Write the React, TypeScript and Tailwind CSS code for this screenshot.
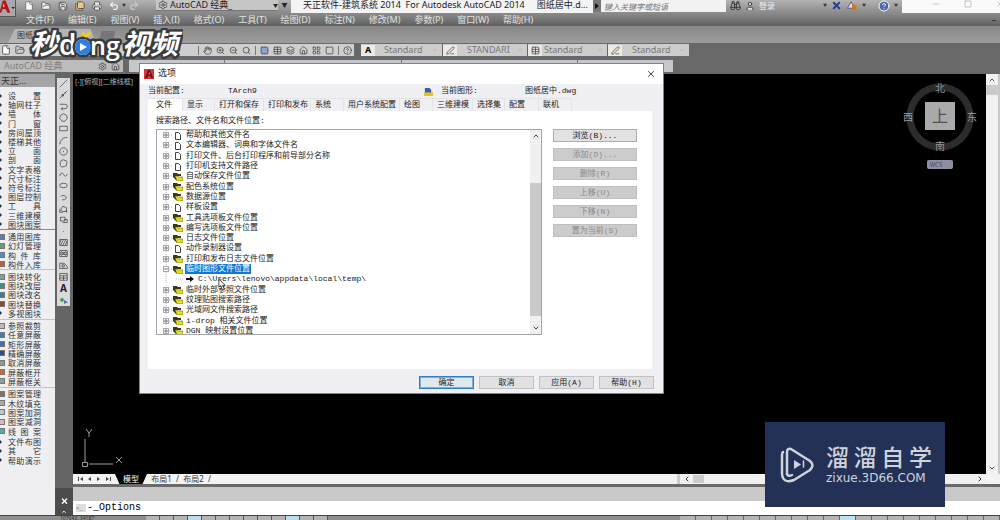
import React from 'react';
import {
  Binoculars,
  ChevronDown,
  ChevronLeft,
  ChevronRight,
  ChevronUp,
  CircleHelp,
  File,
  FolderOpen,
  Grid2x2,
  Hand,
  Home,
  Layers,
  LayoutGrid,
  Minus,
  PenLine,
  Printer,
  Redo2,
  Save,
  SaveAll,
  Search,
  Settings,
  Square,
  Table,
  Undo2,
  User,
  X,
  ZoomIn,
  ZoomOut,
} from 'lucide-react';

const menus = [
  '文件(F)', '编辑(E)', '视图(V)', '插入(I)', '格式(O)', '工具(T)',
  '绘图(D)', '标注(N)', '修改(M)', '参数(P)', '窗口(W)', '帮助(H)',
];

type PaletteGroup = { box: string; items: [string, string][] };

// [label, colour of the little icon]; an empty colour draws the arrow bullet
const palette: PaletteGroup[] = [
  {
    box: 'h-[139px] border-b border-[#8a8a8e]',
    items: [
      ['设 置', ''], ['轴网柱子', ''], ['墙 体', ''], ['门 窗', ''], ['房间屋顶', ''],
      ['楼梯其他', ''], ['立 面', ''], ['剖 面', ''], ['文字表格', ''], ['尺寸标注', ''],
      ['符号标注', ''], ['图层控制', ''], ['工 具', ''], ['三维建模', ''], ['图块图案', ''],
    ],
  },
  {
    box: 'h-[40px] pt-0.5 border-b border-[#c4c2c6]',
    items: [
      ['通用图库', 'bg-[#5b7fb0]'], ['幻灯管理', 'bg-[#6d9a76]'],
      ['构 件 库', 'bg-[#5a86c4]'], ['构件入库', 'bg-[#b8603c]'],
    ],
  },
  {
    box: 'h-[50px] pt-0.5 pb-px border-b border-[#c4c2c6]',
    items: [
      ['图块转化', 'bg-[#7fa39a]'], ['图块改层', 'bg-[#3f8c8c]'], ['图块改名', 'bg-[#3f7c94]'],
      ['图块替换', 'bg-[#8a4a2e]'], ['多视图块', ''],
    ],
  },
  {
    box: 'h-[68px] pt-px pb-px border-b border-[#c4c2c6]',
    items: [
      ['参照裁剪', 'bg-[#b8bcc0]'], ['任意屏蔽', 'bg-[#3d7fae]'], ['矩形屏蔽', 'bg-[#3a72b4]'],
      ['精确屏蔽', 'bg-[#2e4f8c]'], ['取消屏蔽', 'bg-[#8e9a94]'], ['屏蔽框开', 'bg-[#c8693c]'],
      ['屏蔽框关', 'bg-[#8ea090]'],
    ],
  },
  {
    box: 'h-[48px] pt-px',
    items: [
      ['图案管理', 'bg-[#7a7a5a]'], ['木纹填充', 'bg-[#a8a8a8]'], ['图案加洞', 'bg-[#b4c8dc]'],
      ['图案减洞', 'bg-[#dcb8c0]'], ['线 图 案', 'bg-[#58a8a8]'],
    ],
  },
  {
    box: 'h-[29px] pt-px',
    items: [['文件布图', ''], ['其 它', ''], ['帮助演示', '']],
  },
];

const drawTools = [
  'M1 11 L11 1',
  'M1 11 L5 7 L7 5 L11 1 M4 6h2v2h-2z M7 4h2',
  'M1 3h7a3 3 0 0 1 0 6h-5 M5 7l-2 2 2 2',
  'M6 1l4 2 1 4-3 4H4L1 7l1-4z',
  'M1 3h10v6H1z',
  'M1 11C2 5 5 2 11 2 M1 10h1',
  'M6 1a5 5 0 1 0 .1 0z M6 5v2',
  'M3 2q3-2 5 0q4 0 2 4q1 4-3 4q-4 2-5-1q-2-4 1-7z',
  'M1 8q2-7 5-2t5-1',
  'M1 6a5 3 0 1 1 10 0a5 3 0 1 1-10 0z',
  'M2 5a4 3 0 1 1 5 4 M7 9h-3',
  'M2 8l3-5 5 2v5H5z M1 7v4h4 M8 9l3 2',
  'M2 3h6v5H2z M7 6h4v4H5',
  'M5.5 6h1',
  'M1 2h10v8H1z M3 2l-2 4 M6 2L2 10 M9 2L5 10 M11 4L8 10',
  'M1 2h10v8H1z M1 5h10 M1 7h10 M3 3l6 6 M9 3L3 9',
  'M1 3h6l4 4v3H1z M4 5h3v3H4z',
  'M1 2h10v9H1z M1 5h10 M1 8h10 M6 5v6',
];

type TreeNode = { text: string; icon: 'page' | 'folder' | 'path'; open?: boolean };

const tree: TreeNode[] = [
  { text: '帮助和其他文件名', icon: 'page' },
  { text: '文本编辑器、词典和字体文件名', icon: 'page' },
  { text: '打印文件、后台打印程序和前导部分名称', icon: 'page' },
  { text: '打印机支持文件路径', icon: 'page' },
  { text: '自动保存文件位置', icon: 'folder' },
  { text: '配色系统位置', icon: 'folder' },
  { text: '数据源位置', icon: 'folder' },
  { text: '样板设置', icon: 'page' },
  { text: '工具选项板文件位置', icon: 'folder' },
  { text: '编写选项板文件位置', icon: 'folder' },
  { text: '日志文件位置', icon: 'folder' },
  { text: '动作录制器设置', icon: 'page' },
  { text: '打印和发布日志文件位置', icon: 'folder' },
  { text: '临时图形文件位置', icon: 'folder', open: true },
  { text: 'C:\\Users\\lenovo\\appdata\\local\\temp\\', icon: 'path' },
  { text: '临时外部参照文件位置', icon: 'folder' },
  { text: '纹理贴图搜索路径', icon: 'folder' },
  { text: '光域网文件搜索路径', icon: 'folder' },
  { text: 'i-drop 相关文件位置', icon: 'folder' },
  { text: 'DGN 映射设置位置', icon: 'folder' },
];

const optionTabs = [
  ['文件', 'w-[35px] pl-2 bg-white'],
  ['显示', 'w-[32px] pl-1'],
  ['打开和保存', 'w-[49px] pl-1'],
  ['打印和发布', 'w-[47px] pl-1'],
  ['系统', 'w-[33px] pl-1'],
  ['用户系统配置', 'w-[56px] pl-1'],
  ['绘图', 'w-[33px] pl-1'],
  ['三维建模', 'w-[40px] pl-1'],
  ['选择集', 'w-[32px] pl-1'],
  ['配置', 'w-[34px] pl-1'],
  ['联机', 'w-[33px] pl-1'],
];

const sideButtons = ['浏览(B)...', '添加(D)...', '删除(R)', '上移(U)', '下移(N)', '置为当前(S)'];

const AppLogo = ({ className }: { className: string }) => (
  <svg viewBox="0 0 12 12" className={className}>
    <rect width="12" height="12" fill="#d8343a" />
    <path d="M1 11L5 1h2l4 10H8.5L7.6 8H5L3.6 11z" fill="#6c1015" />
    <path d="M5.5 6.2h1.6L6.3 3.6z" fill="#f2b8ba" />
  </svg>
);

const TitleBar = () => (
  <header className="flex h-[13px] shrink-0 items-start bg-gradient-to-b from-[#b4b4b4] to-[#8a8a8a] text-[9px] leading-[10px] text-[#222]">
    <div className="z-10 h-[17px] w-[16px] shrink-0 border-r border-b border-[#555] bg-[#a8a8a8]">
      <svg viewBox="0 0 16 16" className="h-[16px] w-[15px]">
        <path d="M0 11L3 0h3l5 13H8L6 9H3L1 13H0z" fill="#b3161c" />
        <path d="M3 7h2L4 3z" fill="#f5d0d0" />
        <path d="M12 7h4l-2 2z" fill="#222" />
      </svg>
    </div>
    <div className="flex h-[11px] w-[140px] shrink-0 items-center gap-[7px] pl-[8px] text-white">
      <File size={10} fill="#fff" stroke="#666" />
      <FolderOpen size={10} fill="#eee" stroke="#555" />
      <Save size={10} fill="#ddd" stroke="#444" />
      <SaveAll size={10} fill="#e8c98a" stroke="#444" />
      <Printer size={10} fill="#eee" stroke="#444" />
      <Undo2 size={10} stroke="#eee" strokeWidth={3} />
      <span className="-mx-1 text-[4px] text-[#333]">▼</span>
      <Redo2 size={10} stroke="#c8c8c8" strokeWidth={3} />
    </div>
    <div className="flex h-[11px] w-[122px] shrink-0 items-center border-b border-[#777] bg-[#c6c6c6] pl-0.5">
      <Settings size={10} stroke="#444" />
      <select aria-label="工作空间" className="ml-0.5 flex-1 appearance-none bg-transparent leading-[10px]">
        <option>AutoCAD 经典_</option>
      </select>
      <span className="text-[5px]">▼</span>
    </div>
    <span className="w-[13px] shrink-0 text-center text-[6px]">▼</span>
    <div className="flex h-full w-[302px] shrink-0 gap-3 bg-[#f4f4f4] pl-3 leading-[10px] whitespace-pre">
      <span>天正软件-建筑系统 2014  For Autodesk AutoCAD 2014</span>
      <span>图纸居中.d...</span>
    </div>
    <button aria-label="展开搜索" className="flex h-[12px] w-[8px] shrink-0 items-center justify-center bg-[#777]">
      <svg viewBox="0 0 4 6" className="h-[6px] w-[4px]"><path d="M0 0l4 3-4 3z" fill="#111" /></svg>
    </button>
    <input
      aria-label="搜索"
      placeholder="键入关键字或短语"
      className="h-[12px] w-[125px] shrink-0 bg-[#f2f2f2] px-[3px] text-[8px] italic placeholder:text-[#777]"
    />
    <div className="flex h-[11px] min-w-0 flex-1 items-center pl-1 text-[#333]">
      <Binoculars size={11} />
      <User size={10} fill="#ddd" className="ml-1" />
      <a href="#login" className="ml-1 text-[8px] text-[#eee]">登录</a>
      <div className="ml-auto flex items-center gap-1 pr-1">
        <span className="text-[4px]">▼</span>
        <X size={11} stroke="#23408f" strokeWidth={4} />
        <svg viewBox="0 0 12 12" className="h-[11px] w-[12px]">
          <path d="M1 9L5 2l4 7z" fill="#dde" stroke="#557" />
          <rect x="6" y="5" width="5" height="6" fill="#d9721c" />
        </svg>
        <span className="text-[4px]">▼</span>
        <CircleHelp size={12} fill="#4a66b0" stroke="#fff" className="ml-2" />
        <span className="text-[4px]">▼</span>
      </div>
    </div>
    <div className="flex h-full w-[98px] shrink-0 items-start justify-end gap-[24px] bg-[#fafafa] text-[#aaa]">
      <Minus size={8} />
      <Square size={8} />
      <X size={8} className="-mr-1" />
    </div>
  </header>
);

const MenuBar = () => (
  <nav className="flex h-[13px] shrink-0 items-center gap-[14px] bg-gradient-to-b from-[#8c8c8c] to-[#606060] pl-[26px] text-[9px] leading-[13px] text-[#e2e2e2]">
    {menus.map((m) => (
      <a key={m} href="#menu">{m}</a>
    ))}
    <span className="ml-auto pr-1 text-[#222]">–</span>
  </nav>
);

const StyleBox = ({ label, width, pad, icon }: { label: string; width: string; pad: string; icon: React.ReactNode }) => (
  <div className={`flex h-[12px] items-center border-r border-[#666] ${width}`}>
    <span className="flex h-[11px] w-[14px] items-center justify-center bg-[#efe9e4]">{icon}</span>
    <select aria-label="样式" className={`min-w-0 flex-1 appearance-none text-[9px] leading-[12px] text-[#777] ${pad}`}>
      <option>{label}</option>
    </select>
    <ChevronDown size={6} className="mr-1 text-[#999]" />
  </div>
);

const Toolbars = () => (
  <div className="flex h-[31px] shrink-0 flex-col gap-[4px] bg-[#686868] pt-px text-[#444]">
    <div className="flex h-[12px]">
      <div className="flex w-[354px] items-center gap-[4px] bg-[#cfcfcf] pr-[2px] pl-px">
        <File size={10} fill="#fff" />
        <FolderOpen size={10} />
        <Save size={10} />
        <Printer size={10} />
        <span className="ml-auto" />
        <Redo2 size={9} className="mr-3 text-[#aaa]" />
        <span className="h-[9px] w-px bg-[#777]" />
        <Hand size={9} />
        <ZoomIn size={9} />
        <ZoomOut size={9} />
        <Search size={9} />
        <span className="h-[9px] w-px bg-[#777]" />
        <Grid2x2 size={9} fill="#8aa6cc" />
        <Table size={9} />
        <Layers size={9} />
        <Home size={9} />
        <LayoutGrid size={9} />
        <Square size={9} />
        <span className="h-[9px] w-px bg-[#777]" />
        <CircleHelp size={9} />
      </div>
      <div className="ml-[7px] flex bg-[#cdcdcd]">
        <StyleBox label="Standard" width="w-[82px]" pad="pl-[9px]" icon={<span className="text-[9px] font-bold text-black">A</span>} />
        <StyleBox label="STANDARI" width="w-[85px]" pad="pl-[10px]" icon={<PenLine size={9} />} />
        <StyleBox label="Standard" width="w-[80px]" pad="pl-[2px]" icon={<Table size={9} />} />
        <StyleBox label="Standard" width="w-[82px]" pad="pl-[10px]" icon={<PenLine size={9} />} />
      </div>
    </div>
    <div className="flex h-[12px]">
      <div className="flex w-[123px] items-center bg-[#bcbcbc]">
        <select aria-label="工作空间切换" className="w-[98px] appearance-none pl-1 text-[9px] leading-[12px] text-[#808080]">
          <option>AutoCAD 经典</option>
        </select>
        <Settings size={9} />
        <Home size={9} className="ml-1" />
      </div>
      <div className="ml-[6px] flex w-[544px] justify-between bg-[#c4c8cc] px-[95px]">
        <span className="h-full w-px bg-[#777]" />
        <span className="h-full w-px bg-[#777]" />
        <span className="h-full w-px bg-[#777]" />
      </div>
    </div>
  </div>
);

const Palette = () => (
  <aside className="w-[55px] shrink-0 overflow-hidden bg-[#efeef1] text-[8px] text-[#333]">
    <h2 className="mb-[4px] h-[13px] bg-[#a5a5a7] pl-px text-[9px] leading-[13px]">天正...</h2>
    {palette.map((group, i) => (
      <ul key={i} className={`grid auto-rows-fr ${group.box}`}>
        {group.items.map(([label, color]) => (
          <li key={label} className="flex min-h-0 items-center gap-[3px] leading-[9px]">
            {color ? (
              <span className={`h-[6px] w-[5px] border border-l-0 border-[#777] ${color}`} />
            ) : (
              <svg viewBox="0 0 5 6" className="h-[6px] w-[5px]"><path d="M0 1l2 2-2 2z" fill="#234" /></svg>
            )}
            <span className="w-[33px] [text-align-last:justify]">{label}</span>
          </li>
        ))}
      </ul>
    ))}
  </aside>
);

const DrawBar = () => (
  <div className="flex w-[18px] shrink-0 flex-col bg-[#656565]">
    <div className="mt-[4px] ml-[2px] flex h-[228px] w-[13px] flex-col items-center justify-between bg-[#d9d9db] py-px text-[#444]">
      {drawTools.map((d, i) => (
        <svg key={i} viewBox="0 0 12 12" className="h-[9px] w-[9px]" fill="none" stroke="currentColor">
          <path d={d} />
        </svg>
      ))}
      <span className="text-[10px] leading-[10px] font-bold text-[#222]">A</span>
      <svg viewBox="0 0 12 12" className="h-[9px] w-[9px]">
        <circle cx="4" cy="5" r="2.500" fill="#3c9a4a" />
        <path d="M7 5v6l2-2h3z" fill="#3a5f9c" />
      </svg>
    </div>
    <div className="mt-auto flex h-[27px] flex-col items-center gap-1 bg-[#4c4c4c] pt-[9px] text-white">
      <X size={9} strokeWidth={4} />
      <ChevronUp size={6} strokeWidth={4} />
    </div>
  </div>
);

const ViewCube = () => (
  <svg viewBox="0 0 76 92" className="h-[92px] w-[76px]" fontFamily="Noto Sans CJK SC, sans-serif" fontSize="10" textAnchor="middle">
    <circle cx="38" cy="37" r="30" fill="none" stroke="#2c2c2c" strokeWidth="7" />
    <rect x="23" y="22" width="30" height="28" fill="#a9a9ab" />
    <text x="38" y="42" fontSize="16" fill="#505054">上</text>
    <g fill="#9a9a9a">
      <text x="38" y="12">北</text>
      <text x="6" y="41">西</text>
      <text x="70" y="41">东</text>
      <text x="38" y="70">南</text>
    </g>
    <rect x="25" y="80" width="26" height="9" rx="2" fill="#8f8fa2" />
    <text x="34" y="87" fontSize="6" fill="#44445a">WCS</text>
  </svg>
);

const Canvas = () => (
  <div className="flex min-h-0 flex-1 bg-black">
    <div className="flex min-w-0 flex-1 flex-col justify-between">
      <div className="flex justify-between pl-[2px]">
        <span className="pt-[3px] text-[7px] leading-[9px] text-[#b0b0b0]">[-][俯视][二维线框]</span>
        <div className="pt-[6px] pr-[8px]"><ViewCube /></div>
      </div>
      <svg viewBox="0 0 56 48" className="ml-[7px] h-[48px] w-[56px]" fill="none" stroke="#9c9c9c">
        <path d="M5 13v23M9 38h24M2.500 36.500h5v4h-5zM6 3l3 4 3-4M9 7v4M36 31l6 6M42 31l-6 6" />
      </svg>
    </div>
    <div className="flex w-[12px] flex-col items-center bg-[#f1f0f2] text-[#555]">
      <ChevronUp size={8} strokeWidth={3} className="mt-[2px]" />
      <div className="mt-px h-[10px] w-full bg-[#cbcbcb]" />
      <ChevronDown size={8} strokeWidth={3} className="mt-auto mb-[2px]" />
    </div>
    <div className="w-[2px] bg-[#c9c9c9]" />
  </div>
);

const LayoutTabs = () => (
  <div className="flex h-[10px] shrink-0 items-center bg-[#f3f3f3] text-[8px] leading-[10px] text-[#333]">
    <svg viewBox="0 0 42 10" className="h-[10px] w-[42px]" fill="#444">
      <path d="M5 3h1v4H5zM10 3v4L7 5zM18 3v4l-3-2zM24 3v4l3-2zM33 3v4l3-2zM37 3h1v4h-1z" />
    </svg>
    <button className="h-full w-[32px] bg-black text-white [clip-path:polygon(0_0,100%_0,86%_100%,14%_100%)]">模型</button>
    <button className="w-[29px] text-center">布局1</button>
    <span>/</span>
    <button className="w-[29px] text-center">布局2</button>
    <span>/</span>
    <div className="ml-auto flex h-full w-[309px] items-center bg-[#f0f0f0]">
      <span className="h-full w-[3px] bg-[#ccc]" />
      <ChevronLeft size={8} strokeWidth={3} className="ml-[3px]" />
      <span className="ml-[2px] h-[8px] w-[11px] bg-[#cbcbcb]" />
      <ChevronRight size={8} strokeWidth={3} className="mr-[2px] ml-auto" />
    </div>
    <div className="w-[14px]" />
  </div>
);

const CommandLine = () => (
  <div className="shrink-0 border-t-[3px] border-[#6a6a6a] bg-[#c9c9c9]">
    <div className="h-[14px]" />
    <label className="flex h-[14px] items-center bg-white pl-[3px]">
      <span className="flex h-[8px] w-[10px] items-center bg-[#ddd] text-[6px] leading-[8px] text-[#555]">&gt;_</span>
      <input
        aria-label="命令行"
        defaultValue="-_Options"
        className="ml-px h-[14px] flex-1 font-['Liberation_Mono',monospace] text-[10px] leading-[14px] text-black"
      />
    </label>
  </div>
);

const StatusBar = () => (
  <footer className="flex h-[5px] shrink-0 items-start overflow-hidden border-t border-[#444] bg-[#8e8e8e] text-[5px] leading-[5px] text-[#333]">
    <span className="w-[146px] pl-[60px]">107643, 34187</span>
    {Array.from({ length: 13 }, (_, i) => (
      <span
        key={i}
        className={`h-full w-[14px] border-r border-[#555] ${i === 3 || i === 10 ? 'bg-[#b9dcee]' : 'bg-[#b4b4b4]'}`}
      />
    ))}
    <span className="ml-auto flex h-full">
      {Array.from({ length: 20 }, (_, i) => (
        <span
          key={i}
          className={`h-full w-[16px] border-r border-[#666] ${i === 10 ? 'bg-[#b9e4f2]' : 'bg-[#b4b4b4]'}`}
        />
      ))}
    </span>
  </footer>
);

const NodeIcon = ({ icon }: { icon: TreeNode['icon'] }) => {
  if (icon === 'page') {
    return (
      <svg viewBox="0 0 10 9" className="h-[9px] w-[10px]" fill="#fff" stroke="#444">
        <path d="M2.500 1.500h3l2 2v5h-5z" />
      </svg>
    );
  }
  return (
    <svg viewBox="0 0 10 9" className="h-[9px] w-[10px]">
      <path d="M0 1h4l1 1h3v2H4v4H3L0 5z" fill="#3c3a10" />
      <path d="M2 4h2l1 1h5v4H4z" fill="#e6e01e" stroke="#4a4810" strokeWidth="0.500" />
    </svg>
  );
};

const FileTree = () => (
  <div className="flex h-[206px] w-[386px] overflow-hidden border border-[#a5a5aa] bg-white">
    <ul className="grid h-[206px] flex-1 auto-rows-fr pl-[5px]">
      {tree.map((node) => (
        <li key={node.text} className="flex min-h-0 items-center leading-[10px] whitespace-pre">
          {node.icon === 'path' ? (
            <svg viewBox="0 0 35 10" className="h-[10px] w-[35px]">
              <path d="M4 0v10M14 5h8" stroke="#bbb" strokeDasharray="1 1" />
              <path d="M24 4h4V2l4 3-4 3V6h-4z" fill="#111" />
            </svg>
          ) : (
            <>
              <svg viewBox="0 0 11 10" className="h-[10px] w-[11px]" fill="#fff" stroke="#aaa">
                <path d="M4 0v10M7 5h4" stroke="#bbb" strokeDasharray="1 1" />
                <rect x="1.500" y="2.500" width="5" height="5" />
                <path d={node.open ? 'M2 5h4' : 'M2 5h4M4 3v4'} stroke="#777" />
              </svg>
              <NodeIcon icon={node.icon} />
              <span className="w-[2px]" />
            </>
          )}
          <span className={node.open ? 'bg-[#0f78d4] px-px text-white' : 'px-px'}>{node.text}</span>
        </li>
      ))}
    </ul>
    <div className="flex w-[11px] flex-col items-center bg-[#f0f0f0] text-[#444]">
      <ChevronUp size={8} strokeWidth={3} className="mt-[2px]" />
      <div className="mt-[43px] h-[133px] w-full bg-[#cacaca]" />
      <ChevronDown size={8} strokeWidth={3} className="mt-auto mb-[2px]" />
    </div>
  </div>
);

const dialogButton = 'h-[13px] border text-center leading-[11px]';

const OptionsDialog = () => (
  <section
    role="dialog"
    aria-label="选项"
    className="absolute top-[63px] left-[139px] w-[525px] border border-[#5f8fae] bg-[#f0eff3] pb-[4px] font-['Liberation_Mono','Noto_Sans_CJK_SC',monospace] text-[8px] text-[#222]"
  >
    <div className="flex h-[20px] items-center bg-white pr-[7px] pl-[4px]">
      <AppLogo className="h-[10px] w-[10px]" />
      <h1 className="ml-[4px] text-[9px] leading-[12px]">选项</h1>
      <button aria-label="关闭" className="ml-auto"><X size={10} /></button>
    </div>
    <div className="flex h-[14px] items-center pl-[8px]">
      <span className="w-[80px]">当前配置:</span>
      <span className="w-[196px]">TArch9</span>
      <svg viewBox="0 0 10 10" className="h-[9px] w-[9px]">
        <path d="M1 1h5l2 2v4H1z" fill="#3a5bb0" />
        <path d="M0 6h10v4H0z" fill="#e2c51c" />
      </svg>
      <span className="ml-[8px] w-[84px]">当前图形:</span>
      <span>图纸居中.dwg</span>
    </div>
    <div role="tablist" className="flex h-[13px] pl-[8px]">
      {optionTabs.map(([label, cls]) => (
        <button
          key={label}
          role="tab"
          className={`shrink-0 border-t border-r border-[#e4e3e8] text-left leading-[12px] whitespace-nowrap ${cls}`}
        >
          {label}
        </button>
      ))}
    </div>
    <div className="mr-[11px] ml-[8px] bg-white px-[8px] pt-[4px] pb-[34px]">
      <p className="h-[14px] leading-[12px]">搜索路径、文件名和文件位置:</p>
      <div className="flex gap-[11px]">
        <FileTree />
        <div className="flex w-[84px] flex-col gap-[6px]">
          {sideButtons.map((label, i) => (
            <button
              key={label}
              disabled={i > 0}
              className={`${dialogButton} ${i === 0 ? 'border-[#adadad] bg-[#e2e2e2]' : 'border-[#bfbfbf] bg-[#cccccc] text-[#8a8a8a]'}`}
            >
              {label}
            </button>
          ))}
        </div>
      </div>
    </div>
    <div className="flex justify-end gap-[5px] pt-[7px] pr-[9px]">
      <button className={`${dialogButton} w-[55px] border-[#2f7fc4] bg-[#e1e8ee] outline outline-[#7fb0da] -outline-offset-2`}>确定</button>
      <button className={`${dialogButton} w-[55px] border-[#c2c2c4] bg-[#e1e1e1]`}>取消</button>
      <button className={`${dialogButton} w-[55px] border-[#c2c2c4] bg-[#e1e1e1]`}>应用(A)</button>
      <button className={`${dialogButton} w-[55px] border-[#c2c2c4] bg-[#e1e1e1]`}>帮助(H)</button>
    </div>
  </section>
);

const VideoLogo = () => (
  <svg
    viewBox="0 0 158 36"
    className="absolute top-[28px] left-[25px] h-[36px] w-[158px]"
    fontFamily="Noto Sans CJK SC, sans-serif"
    fontWeight="700"
    fill="#fff"
    stroke="#3a3a3c"
    strokeWidth="5"
    strokeLinejoin="round"
    paintOrder="stroke"
  >
    <text x="5" y="26" fontSize="28" fontStyle="italic">秒</text>
    <text x="34" y="27" fontSize="28" fontWeight="600" fontFamily="Open Sans, sans-serif">d</text>
    <circle cx="58" cy="19" r="8" />
    <text x="65" y="27" fontSize="25" fontWeight="600" fontFamily="Open Sans, sans-serif">ng</text>
    <text x="97" y="26" fontSize="28" fontStyle="italic">视频</text>
    <circle cx="58" cy="19" r="8" fill="#2f7fe0" stroke="none" />
    <path d="M55 15l7 4-7 4z" stroke="none" />
    <path d="M57 5l4 3 4-3" fill="none" stroke="#f2cf1f" strokeWidth="3" />
  </svg>
);

const SiteBadge = () => (
  <div className="absolute right-[55px] bottom-[13px] flex h-[85px] w-[180px] items-center bg-[#233156] pl-[15px] text-[#cfd3dc]">
    <svg viewBox="0 0 34 36" className="h-[36px] w-[34px]" fill="none" stroke="currentColor" strokeWidth="2.500" strokeLinecap="round" strokeLinejoin="round">
      <path d="M7 27V5q0-4 4-3l19 12q5 4 0 9L14 33q-11 4-12-6V8q0-2 1-3" />
      <path d="M7 27q1 3 5 1" />
      <path d="M14 13l7 4.500-7 4.500z" fill="currentColor" stroke="none" />
      <path d="M23.500 14v6" strokeWidth="1.500" />
    </svg>
    <div className="ml-[12px] flex flex-col gap-[2px]">
      <div className="flex w-[106px] justify-between text-[23px] leading-[24px] font-medium">
        <span>溜</span><span>溜</span><span>自</span><span>学</span>
      </div>
      <div className="font-['DejaVu_Sans',sans-serif] text-[12px] leading-[14px]">zixue.3D66.COM</div>
    </div>
  </div>
);

const App: React.FC = () => {
  return (
    <div className="relative flex h-screen flex-col overflow-hidden bg-[#686868] font-['Noto_Sans','Noto_Sans_CJK_SC',sans-serif]">
      <TitleBar />
      <MenuBar />
      <div className="flex h-[17px] shrink-0 items-end bg-gradient-to-b from-[#888] to-[#9d9d9d] pl-[8px]">
        <div className="h-[14px] w-[88px] bg-[#b5b5b5] pl-[9px] text-[8px] leading-[12px] text-[#333] [clip-path:polygon(8%_0,94%_0,100%_100%,0_100%)]">图纸</div>
        <div className="ml-1 h-[12px] w-[14px] -skew-x-12 bg-[#777]" />
      </div>
      <Toolbars />
      <main className="flex min-h-0 flex-1">
        <Palette />
        <DrawBar />
        <div className="flex min-w-0 flex-1 flex-col">
          <Canvas />
          <LayoutTabs />
          <CommandLine />
        </div>
      </main>
      <StatusBar />
      <OptionsDialog />
      <svg viewBox="0 0 10 14" className="absolute top-[278px] left-[218px] h-[13px] w-[9px]">
        <path d="M1 1v9l2-2 2 5 2-1-2-4h3z" fill="#fff" stroke="#333" />
      </svg>
      <VideoLogo />
      <SiteBadge />
    </div>
  );
};

export default App;
